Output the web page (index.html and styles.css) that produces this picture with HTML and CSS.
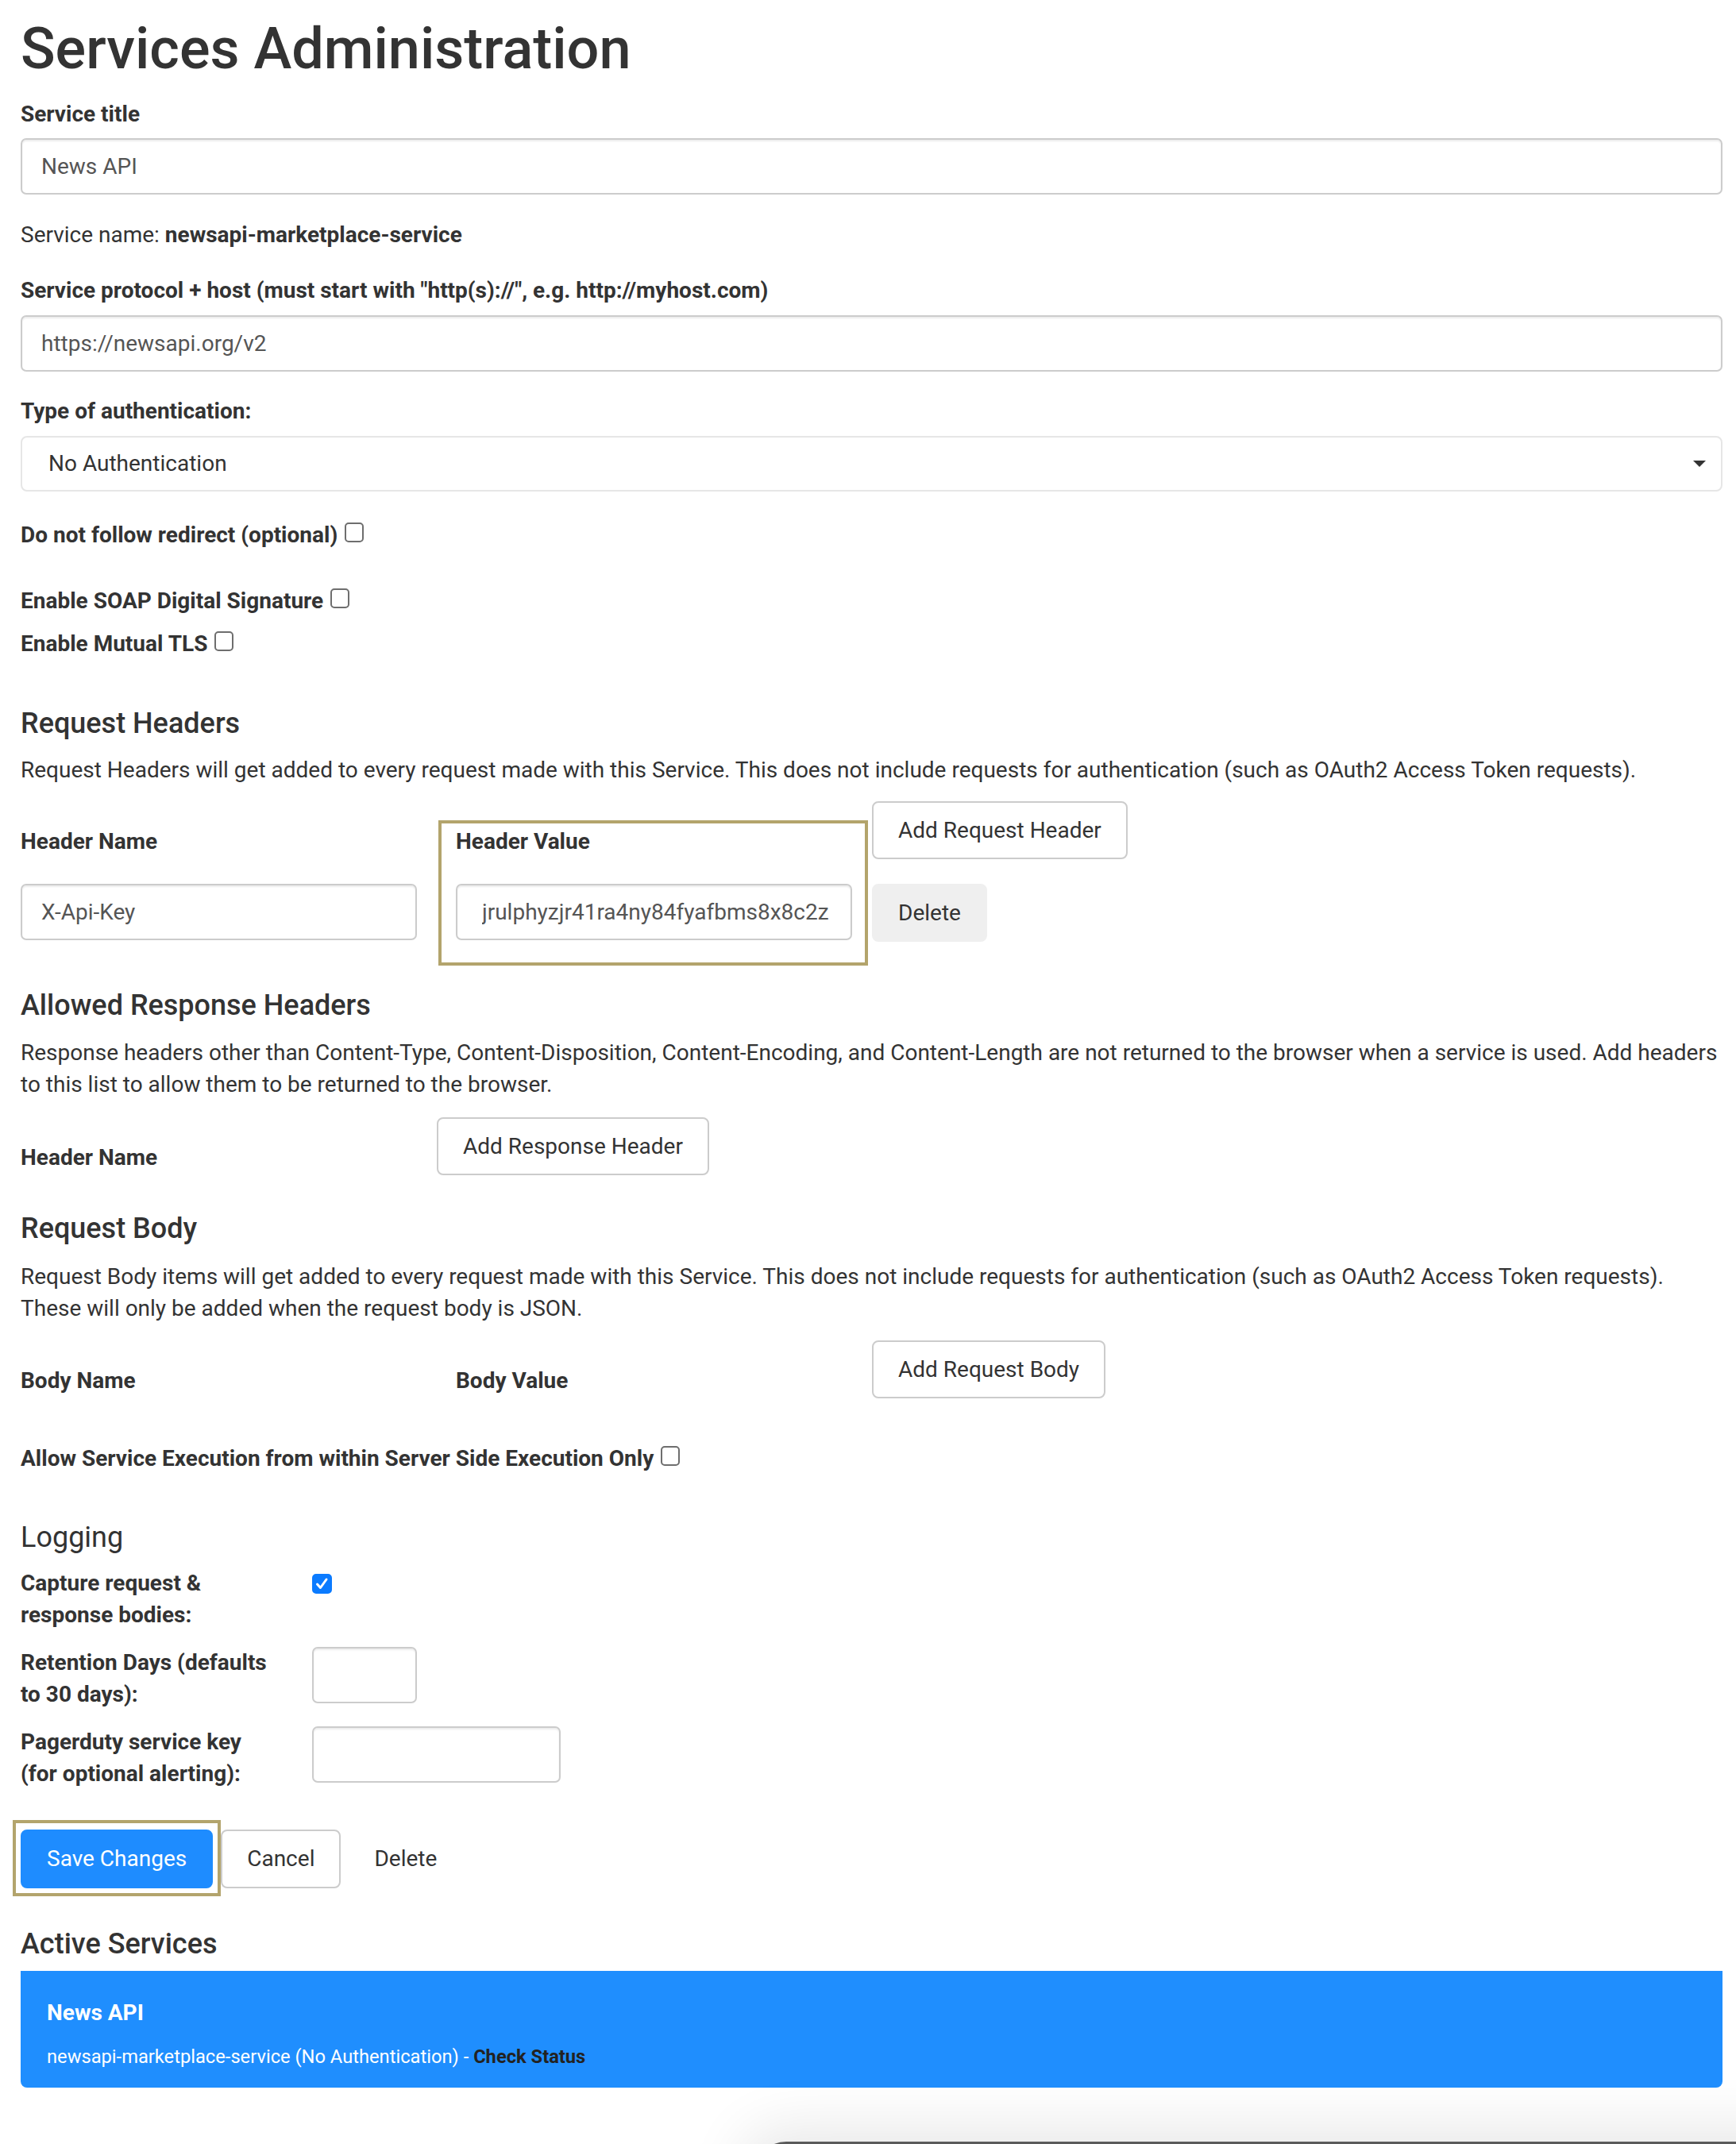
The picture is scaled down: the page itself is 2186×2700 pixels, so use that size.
FILE: index.html
```html
<!DOCTYPE html>
<html lang="en">
<head>
<meta charset="utf-8">
<title>Services Administration</title>
<link rel="stylesheet" href="styles.css">
</head>
<body>
<div class="page">
  <h1 class="page-title">Services Administration</h1>

  <label class="lbl lbl-first" for="svc-title">Service title</label>
  <input class="control" id="svc-title" type="text" value="News API">

  <p class="svc-name">Service name: <b>newsapi-marketplace-service</b></p>

  <label class="lbl lbl-gap" for="svc-host">Service protocol + host (must start with "http(s)://", e.g. http://myhost.com)</label>
  <input class="control" id="svc-host" type="text" value="https://newsapi.org/v2">

  <label class="lbl lbl-gap" for="svc-auth">Type of authentication:</label>
  <div class="select-wrap">
    <select class="select" id="svc-auth">
      <option>No Authentication</option>
    </select>
  </div>

  <div class="check-line cl-redirect"><span>Do not follow redirect (optional)</span><input class="chk" type="checkbox"></div>
  <div class="check-line cl-soap"><span>Enable SOAP Digital Signature</span><input class="chk" type="checkbox"></div>
  <div class="check-line cl-tls"><span>Enable Mutual TLS</span><input class="chk" type="checkbox"></div>

  <h4 class="section-title st-req">Request Headers</h4>
  <p class="desc desc-req">Request Headers will get added to every request made with this Service. This does not include requests for authentication (such as OAuth2 Access Token requests).</p>

  <div class="kv kv-req">
    <span class="kv-lbl cell-r1c1">Header Name</span>
    <span class="kv-lbl cell-r1c2">Header Value</span>
    <button class="btn kv-btn cell-r1c3" type="button">Add Request Header</button>
    <input class="control cell-r2c1" type="text" value="X-Api-Key">
    <input class="control control-val cell-r2c2" type="text" value="jrulphyzjr41ra4ny84fyafbms8x8c2z">
    <button class="btn btn-muted kv-btn cell-r2c3" type="button">Delete</button>
    <div class="highlight"></div>
  </div>

  <h4 class="section-title st-resp">Allowed Response Headers</h4>
  <p class="desc desc-resp">Response headers other than Content-Type, Content-Disposition, Content-Encoding, and Content-Length are not returned to the browser when a service is used. Add headers to this list to allow them to be returned to the browser.</p>

  <div class="kv kv-resp">
    <span class="kv-lbl">Header Name</span>
    <button class="btn kv-btn" type="button">Add Response Header</button>
  </div>

  <h4 class="section-title st-body">Request Body</h4>
  <p class="desc desc-body">Request Body items will get added to every request made with this Service. This does not include requests for authentication (such as OAuth2 Access Token requests). These will only be added when the request body is JSON.</p>

  <div class="kv kv-body">
    <span class="kv-lbl">Body Name</span>
    <span class="kv-lbl">Body Value</span>
    <button class="btn kv-btn" type="button">Add Request Body</button>
  </div>

  <div class="check-line cl-server"><span>Allow Service Execution from within Server Side Execution Only</span><input class="chk" type="checkbox"></div>

  <h4 class="section-title st-log">Logging</h4>
  <div class="log-grid">
    <label class="log-lbl">Capture request &amp; response bodies:</label>
    <span class="log-chk">
      <input class="chk chk-on" type="checkbox" checked>
      <svg class="chk-mark" viewBox="0 0 25 25" width="25" height="25" aria-hidden="true"><path d="M6.5 13 L10.5 17.5 L18 7" fill="none" stroke="#fff" stroke-width="3" stroke-linecap="round" stroke-linejoin="round"/></svg>
    </span>
    <label class="log-lbl">Retention Days (defaults to 30 days):</label>
    <input class="control control-days" type="text">
    <label class="log-lbl">Pagerduty service key (for optional alerting):</label>
    <input class="control control-pd" type="text">
  </div>

  <div class="actions">
    <button class="btn btn-primary" type="button">Save Changes</button>
    <button class="btn" type="button">Cancel</button>
    <button class="btn btn-link" type="button">Delete</button>
  </div>

  <h4 class="section-title st-active">Active Services</h4>
  <div class="svc-panel">
    <div class="svc-panel-title">News API</div>
    <div class="svc-panel-sub">newsapi-marketplace-service (No Authentication) - <a class="svc-status" href="#">Check Status</a></div>
  </div>

  <div class="dock-shadow"></div>
</div>
</body>
</html>
```

FILE: styles.css
```css
* { box-sizing: border-box; }

html, body {
  margin: 0;
  padding: 0;
  background: #fff;
}

body {
  font-family: Roboto, "Liberation Sans", Arial, sans-serif;
  font-size: 28px;
  line-height: 40px;
  color: #333;
}

.page {
  position: relative;
  height: 2700px;
  overflow: hidden;
  padding: 22px 17px 0 26px;
}

.page-title {
  margin: 0;
  font-size: 72px;
  line-height: 79px;
  font-weight: 500;
  color: #333;
}

.lbl {
  display: block;
  font-weight: 700;
  margin: 30px 0 11px;
}
.lbl-first { margin-top: 23px; margin-bottom: 10px; }

.control {
  display: block;
  width: 100%;
  height: 71px;
  padding: 0 24px;
  font: inherit;
  color: #555;
  background: #fff;
  border: 2px solid #ccc;
  border-radius: 7px;
  box-shadow: inset 0 2px 2px rgba(0, 0, 0, 0.075);
  outline: none;
}
.control-val { padding-left: 31px; padding-right: 10px; }

.svc-name { margin: 31px 0 0; }
.svc-name b { font-weight: 700; }

.select-wrap {
  position: relative;
}
.select {
  display: block;
  width: 100%;
  height: 70px;
  padding: 0 50px 0 33px;
  font: inherit;
  color: #333;
  background: #fff;
  border: 2px solid #e6e6e6;
  border-radius: 8px;
  -webkit-appearance: none;
  appearance: none;
  outline: none;
}
.select-wrap::after {
  content: "";
  position: absolute;
  right: 21px;
  top: 31px;
  border-left: 8px solid transparent;
  border-right: 8px solid transparent;
  border-top: 8px solid #333;
  pointer-events: none;
}

.check-line {
  font-weight: 700;
}
.chk {
  -webkit-appearance: none;
  appearance: none;
  display: inline-block;
  width: 24px;
  height: 25px;
  margin: 0 0 0 9px;
  vertical-align: baseline;
  background: #fff;
  border: 2px solid #6e6e6e;
  border-radius: 5px;
}
.cl-redirect { margin-top: 35px; }
.cl-soap { margin-top: 43px; }
.cl-tls { margin-top: 14px; }
.cl-server { margin-top: 56px; }

.section-title {
  margin: 60px 0 0;
  font-size: 36px;
  line-height: 40px;
  font-weight: 500;
  color: #333;
}
.st-body { margin-top: 47px; }
.st-log { margin-top: 59px; font-weight: 400; }
.st-active { margin-top: 50px; }

.desc { margin: 19px 0 0; }
.desc-resp { margin-top: 20px; }
.desc-body { margin-top: 21px; }

.kv {
  display: grid;
  grid-template-columns: repeat(4, 1fr);
  column-gap: 49px;
  row-gap: 31px;
  align-items: start;
}
.kv-req { margin-top: 19px; }
.kv-resp { margin-top: 21px; }
.kv-body { margin-top: 20px; }

.cell-r1c1 { grid-row: 1; grid-column: 1; }
.cell-r1c2 { grid-row: 1; grid-column: 2; }
.cell-r1c3 { grid-row: 1; grid-column: 3; }
.cell-r2c1 { grid-row: 2; grid-column: 1; }
.cell-r2c2 { grid-row: 2; grid-column: 2; }
.cell-r2c3 { grid-row: 2; grid-column: 3; }

.kv-lbl {
  align-self: end;
  font-weight: 700;
  margin-bottom: 2px;
}
.kv-btn {
  justify-self: start;
  margin-left: -24px;
}

.highlight {
  grid-column: 2;
  grid-row: 1 / 3;
  align-self: stretch;
  margin: 24px -20px -30px -22px;
  border: 4px solid #b3a46c;
  pointer-events: none;
}

.btn {
  display: inline-flex;
  align-items: center;
  justify-content: center;
  height: 73px;
  padding: 0 31px;
  font: inherit;
  color: #333;
  background: #fff;
  border: 2px solid #ccc;
  border-radius: 8px;
  cursor: pointer;
  white-space: nowrap;
}
.btn-muted {
  background: #efefef;
  border-color: #efefef;
}
.btn-primary {
  position: relative;
  background: #1e8cff;
  border-color: #1e8cff;
  color: #fff;
}
.btn-primary::after {
  content: "";
  position: absolute;
  left: -12px;
  right: -12px;
  top: -14px;
  bottom: -12px;
  border: 4px solid #b3a46c;
  pointer-events: none;
}
.btn-link {
  background: transparent;
  border-color: transparent;
}

.log-grid {
  margin-top: 18px;
  display: grid;
  grid-template-columns: 316px auto;
  column-gap: 51px;
  row-gap: 20px;
  justify-items: start;
  align-items: start;
}
.log-lbl {
  font-weight: 700;
}
.log-chk {
  position: relative;
  display: block;
  margin-top: 8px;
  width: 25px;
  height: 25px;
}
.log-chk .chk {
  display: block;
  margin: 0;
  width: 25px;
  height: 25px;
}
.chk-on {
  background: #0b7bff;
  border-color: #0b7bff;
}
.chk-mark {
  position: absolute;
  left: 0;
  top: 0;
  pointer-events: none;
}
.control-days { width: 132px; }
.control-pd { width: 313px; }

.actions {
  margin-top: 50px;
  display: flex;
  gap: 10px;
  align-items: center;
}
.actions .btn { height: 74px; }
.actions .btn-link { margin-left: -1px; }

.svc-panel {
  margin-top: 14px;
  height: 147px;
  padding: 33px 34px 0 33px;
  background: #1f8efe;
  border-radius: 0 0 8px 8px;
  color: #fff;
}
.svc-panel-title {
  font-weight: 700;
}
.svc-panel-sub {
  margin-top: 18px;
  font-size: 23.7px;
  line-height: 34px;
}
.svc-status {
  color: #222;
  font-weight: 700;
  text-decoration: none;
}

.dock-shadow {
  position: absolute;
  left: 950px;
  top: 2697px;
  width: 1400px;
  height: 80px;
  background: #5a5a5a;
  border-top-left-radius: 40px;
  box-shadow: 0 0 70px 20px rgba(0, 0, 0, 0.09);
}
```
